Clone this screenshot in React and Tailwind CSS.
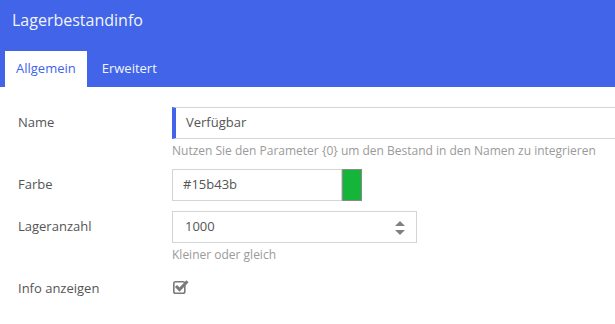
export default function App() {
  const font = { fontFamily: '"Open Sans", "Noto Sans", sans-serif' };
  return (
    <div className="w-[615px] h-[324px] overflow-hidden bg-white" style={font}>
      <div className="bg-[#4164e9] h-[87px] flex flex-col">
        <div className="pl-[12px] pt-[9px] text-[16px] leading-[22px] text-[#f2f4fd]">Lagerbestandinfo</div>
        <div className="mt-auto flex pl-[5px] gap-[4px] text-[13px]">
          <div className="bg-white text-[#4164e9] h-[36px] px-[11px] flex items-center">Allgemein</div>
          <div className="text-[#f2f4fd] h-[36px] px-[11px] flex items-center">Erweitert</div>
        </div>
      </div>
      <div className="pl-[18px] pt-[20px] text-[13px] text-[#555]">
        {/* Name */}
        <div className="flex">
          <div className="w-[154px] h-[32px] flex items-center">Name</div>
          <div className="flex-1 -mr-[20px]">
            <div className="h-[32px] border border-[#d4d4d4] border-l-[4px] border-l-[#4164e9] pl-[10px] flex items-center">Verfügbar</div>
            <div className="mt-[4px] text-[12px] leading-[16px] text-[#9a9a9a]">Nutzen Sie den Parameter {"{0}"} um den Bestand in den Namen zu integrieren</div>
          </div>
        </div>
        {/* Farbe */}
        <div className="flex mt-[10px]">
          <div className="w-[154px] h-[32px] flex items-center">Farbe</div>
          <div className="flex">
            <div className="w-[170px] h-[32px] border border-[#d4d4d4] pl-[10px] flex items-center">#15b43b</div>
            <div className="w-[20px] h-[32px] bg-[#15b43b] border border-[#8a8a8a]"></div>
          </div>
        </div>
        {/* Lageranzahl */}
        <div className="flex mt-[10px]">
          <div className="w-[154px] h-[32px] flex items-center">Lageranzahl</div>
          <div>
            <div className="w-[245px] h-[32px] border border-[#d4d4d4] pl-[12px] pr-[11px] flex items-center justify-between">
              <span>1000</span>
              <svg width="10" height="16" viewBox="0 0 10 16" className="mt-[2px]">
                <path d="M5 1 L10 6 L0 6 Z" fill="#808080" />
                <path d="M0 10 L10 10 L5 15 Z" fill="#808080" />
              </svg>
            </div>
            <div className="mt-[4px] text-[12px] leading-[16px] text-[#9a9a9a]">Kleiner oder gleich</div>
          </div>
        </div>
        {/* Info anzeigen */}
        <div className="flex mt-[10px]">
          <div className="w-[154px] h-[32px] flex items-center">Info anzeigen</div>
          <div className="h-[32px] flex items-start pt-[7px] pl-[1px]">
            <svg width="18" height="15" viewBox="0 0 18 15">
              <rect x="0.8" y="1.8" width="11" height="11.4" rx="1.8" fill="none" stroke="#7a7a7a" strokeWidth="1.6" />
              <path d="M3 6 L6.5 9.5 L14.5 1.2" fill="none" stroke="#7a7a7a" strokeWidth="3" />
            </svg>
          </div>
        </div>
      </div>
    </div>
  );
}
